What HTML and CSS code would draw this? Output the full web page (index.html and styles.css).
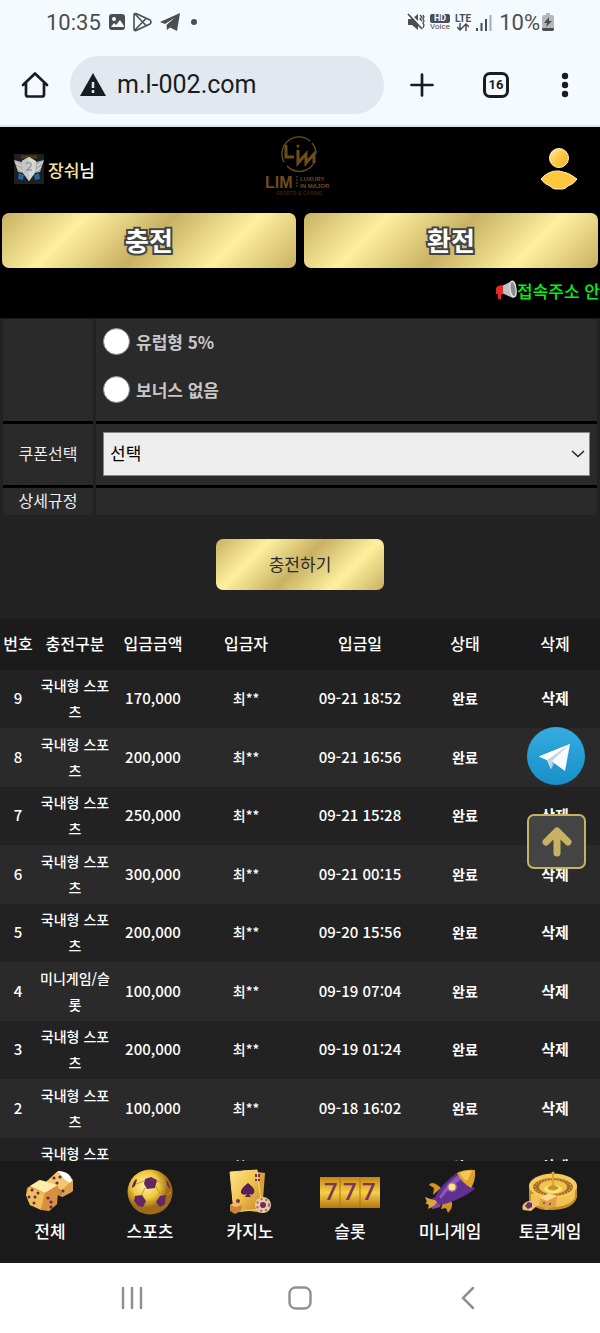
FILE: index.html
```html
<!DOCTYPE html>
<html lang="ko">
<head>
  <meta charset="UTF-8" />
  <meta name="viewport" content="width=device-width, initial-scale=1.0"/>
  <title>충전</title>
  <link rel="stylesheet" href="styles.css">
</head>
<body>
  <!-- phone status bar -->
  <div class="status">
    <div class="status-left">
      <span class="clock">10:35</span>
      <svg width="18" height="18" viewBox="0 0 18 18"><rect x="1" y="1" width="16" height="16" rx="3" fill="#4b4e51"/><circle cx="6" cy="6" r="2" fill="#f5faff"/><path d="M3 14l3-4 2 2 4-5 4 6v1z" fill="#f5faff"/></svg>
      <svg width="20" height="20" viewBox="0 0 20 20" fill="none" stroke="#4b4e51" stroke-width="1.6" stroke-linejoin="round"><path d="M2 1.500Q1 1.500 1 3v14q0 2 2 1.500L17 12q2-2 0-4L3 1.500z"/><path d="M2 2l11 11.500M2 18L13 6.500"/></svg>
      <svg width="20" height="18" viewBox="0 0 20 18"><path d="M0 9L20 0 17 18 10 14.500 7 17 6.500 12 15 4.500 5 11Z" fill="#4b4e51"/></svg>
      <span class="dot"></span>
    </div>
    <div class="status-right">
      <svg width="18" height="18" viewBox="0 0 18 18"><path d="M1 6h4l6-5v16l-6-5H1z" fill="#4b4e51"/><path d="M2 0l14 15" stroke="#f5faff" stroke-width="2"/><path d="M1 1l14 15" stroke="#4b4e51" stroke-width="1.800"/><path d="M13 2l2 2-2 2 2 2M16 2l1 2-1 2 1 2-1 2 1 2-1 3" fill="none" stroke="#4b4e51" stroke-width="1.300"/></svg>
      <span class="hd"><b>HD</b><small>Voice</small></span>
      <span class="lte"><b>LTE</b>
        <svg width="12" height="8" viewBox="0 0 12 8" fill="none" stroke="#4b4e51" stroke-width="1.500"><path d="M3 0v7M0 4l3 3 3-3M9 8V1M6 4l3-3 3 3"/></svg>
      </span>
      <svg class="signal" width="16" height="17" viewBox="0 0 16 17"><path d="M1 17v-3M5.500 17V9M10 17V5" stroke="#4b4e51" stroke-width="2"/><path d="M14.500 17V1" stroke="#a9adb1" stroke-width="2"/></svg>
      <span class="battery"><span class="clock">10%</span>
      <svg width="12" height="18" viewBox="0 0 12 18"><path d="M4 0h4v2h2q2 0 2 2v12q0 2-2 2H2q-2 0-2-2V4q0-2 2-2h2z" fill="#b4b8bb"/><path d="M0 15h12v1q0 2-2 2H2q-2 0-2-2z" fill="#4b4e51"/><path d="M7 4L2 10h3l-1 4 6-6H7z" fill="#4b4e51"/></svg></span>
    </div>
  </div>

  <!-- browser toolbar -->
  <div class="toolbar">
    <button class="tool home" aria-label="홈">
      <svg width="28" height="28" viewBox="0 0 28 28" fill="none" stroke="#191c20" stroke-width="2.700" stroke-linejoin="round" stroke-linecap="round"><path d="M2 14L14 2.500 26 14M5 12v11.500q0 2 2 2h14q2 0 2-2V12"/></svg>
    </button>
    <label class="address">
      <svg width="26" height="24" viewBox="0 0 26 24"><path d="M13 0L26 23H0z" fill="#191c20"/><path d="M13 9v6M13 17v3" stroke="#e2e8f0" stroke-width="2.500"/></svg>
      <input type="text" value="m.l-002.com" aria-label="주소">
    </label>
    <button class="tool" aria-label="새 탭">
      <svg width="24" height="24" viewBox="0 0 24 24" stroke="#191c20" stroke-width="2.700" stroke-linecap="round"><path d="M12 1.500v21M1.500 12h21"/></svg>
    </button>
    <button class="tool tabs" aria-label="탭 목록"><span>16</span></button>
    <button class="tool more" aria-label="메뉴">
      <svg width="8" height="26" viewBox="0 0 8 26" fill="#191c20"><circle cx="4" cy="4" r="3.200"/><circle cx="4" cy="13" r="3.200"/><circle cx="4" cy="22" r="3.200"/></svg>
    </button>
  </div>

  <header class="header">
    <div class="header-top">
      <div class="user">
        <svg width="30" height="30" viewBox="0 0 30 30"><rect width="30" height="30" fill="#1c201e"/><path d="M7 3h16" stroke="#523817" stroke-width="3"/><path d="M5 19l5 2-1 5-5-1zM25 19l-5 2 1 5 5-1z" fill="#2467ae"/><path d="M0 6l8 2 7-5 7 5 8-2-4 12-6 1-5 8-5-8-6-1z" fill="#aeb2b1"/><path d="M8 7l7-4 7 4-1 12-6 8-6-8z" fill="#d6d8d7"/><path d="M8 7l7-4v24l-6-8z" fill="#c4c7c6"/><path d="M1 8l6 4M3 13l5 4M29 8l-6 4M27 13l-5 4" stroke="#e8e9e8" stroke-width="1"/><path d="M12 10q3-3 5 0 1 2-4 6h5" fill="none" stroke="#959b9b" stroke-width="1.500"/></svg>
        <span><span class="gold">장숴</span>님</span>
      </div>
      <a class="logo" href="#" aria-label="LIM">
        <svg width="72" height="62" viewBox="0 0 72 62" fill="none" stroke="#6d4d1b">
          <path d="M20 27A17 17 0 0 1 46 6M48 8A17 17 0 0 1 52 19M50 28A17 17 0 0 1 23 31" stroke-width="1.300"/>
          <path d="M22 10v12h8M34 15v13l8-9v9l8-9v9" stroke-width="3"/><circle cx="34" cy="11" r="1.500" fill="#6d4d1b" stroke="none"/>
          <path d="M33 41v12" stroke-width="1" stroke-dasharray="2 1"/>
          <g fill="#6d4d1b" stroke="none" font-family="Liberation Sans" font-weight="bold"><text x="1" y="53" font-size="16">LIM</text><text x="36" y="46" font-size="6">LUXURY</text><text x="36" y="53" font-size="6">IN MAJOR</text><text x="12" y="60" font-size="5" fill="#33240c">SPORTS &amp; CASINO</text></g>
        </svg>
      </a>
      <a class="profile" href="#" aria-label="내 정보">
        <svg width="38" height="42" viewBox="0 0 38 42"><defs><linearGradient id="person" x2="1" y2="1"><stop stop-color="#fff0b5"/><stop offset=".45" stop-color="#ffc947"/><stop offset="1" stop-color="#eead2c"/></linearGradient></defs><circle cx="19" cy="10" r="9.500" fill="url(#person)" stroke="#fff4cf"/><path d="M1 31Q9 22 19 23t18 8q-3 5-9 7-3 3-5 3h-8q-2 0-5-3-6-2-9-7z" fill="#fdc83e" stroke="#fff0be"/></svg>
      </a>
    </div>
    <div class="money">
      <button class="gold-btn big">충전</button>
      <button class="gold-btn big">환전</button>
    </div>
    <div class="notice">
      <svg width="21" height="20" viewBox="0 0 21 20"><path d="M6 6L16 1q4 0 4 8t-3 9L6 13z" fill="#bfc0c1"/><ellipse cx="17" cy="9" rx="3" ry="8" transform="rotate(-8 17 9)" fill="#8b8d8f" stroke="#e4e4e4" stroke-width="1.200"/><path d="M2 6l5-1v9l-2 1v4H2v-5H0V8z" fill="#df2b2b"/></svg>
      <span>접속주소 안</span>
    </div>
  </header>

  <main class="content">
    <form class="charge">
      <div class="row row-bonus">
        <div class="label"></div>
        <div class="field">
          <label class="bonus"><input type="radio" name="bonus">유럽형 5%</label>
          <label class="bonus"><input type="radio" name="bonus">보너스 없음</label>
        </div>
      </div>
      <div class="row row-coupon">
        <label class="label" for="coupon">쿠폰선택</label>
        <div class="field">
          <div class="select">
            <select id="coupon"><option>선택</option></select>
            <svg width="14" height="8" viewBox="0 0 14 8" fill="none" stroke="#222" stroke-width="1.500"><path d="M1 1l6 5.500L13 1"/></svg>
          </div>
        </div>
      </div>
      <div class="row row-rule">
        <div class="label">상세규정</div>
        <div class="field"></div>
      </div>
      <button type="button" class="gold-btn submit">충전하기</button>
    </form>

    <table class="history">
      <colgroup><col class="c-no"><col class="c-kind"><col class="c-kind"><col class="c-name"><col class="c-date"><col class="c-state"><col class="c-state"></colgroup>
      <thead>
        <tr><th>번호</th><th>충전구분</th><th>입금금액</th><th>입금자</th><th>입금일</th><th>상태</th><th>삭제</th></tr>
      </thead>
      <tbody>
        <tr><td>9</td><td class="kind">국내형 스포츠</td><td>170,000</td><td class="name">최**</td><td>09-21 18:52</td><td class="state">완료</td><td><a href="#">삭제</a></td></tr>
        <tr><td>8</td><td class="kind">국내형 스포츠</td><td>200,000</td><td class="name">최**</td><td>09-21 16:56</td><td class="state">완료</td><td><a href="#">삭제</a></td></tr>
        <tr><td>7</td><td class="kind">국내형 스포츠</td><td>250,000</td><td class="name">최**</td><td>09-21 15:28</td><td class="state">완료</td><td><a href="#">삭제</a></td></tr>
        <tr><td>6</td><td class="kind">국내형 스포츠</td><td>300,000</td><td class="name">최**</td><td>09-21 00:15</td><td class="state">완료</td><td><a href="#">삭제</a></td></tr>
        <tr><td>5</td><td class="kind">국내형 스포츠</td><td>200,000</td><td class="name">최**</td><td>09-20 15:56</td><td class="state">완료</td><td><a href="#">삭제</a></td></tr>
        <tr><td>4</td><td class="kind">미니게임/슬롯</td><td>100,000</td><td class="name">최**</td><td>09-19 07:04</td><td class="state">완료</td><td><a href="#">삭제</a></td></tr>
        <tr><td>3</td><td class="kind">국내형 스포츠</td><td>200,000</td><td class="name">최**</td><td>09-19 01:24</td><td class="state">완료</td><td><a href="#">삭제</a></td></tr>
        <tr><td>2</td><td class="kind">국내형 스포츠</td><td>100,000</td><td class="name">최**</td><td>09-18 16:02</td><td class="state">완료</td><td><a href="#">삭제</a></td></tr>
        <tr><td>1</td><td class="kind">국내형 스포츠</td><td>100,000</td><td class="name">최**</td><td>09-18 00:00</td><td class="state">완료</td><td><a href="#">삭제</a></td></tr>
      </tbody>
    </table>
  </main>

  <div class="floating">
    <a href="#" aria-label="텔레그램">
      <svg width="58" height="58" viewBox="0 0 58 58"><defs><linearGradient id="tg" x2="0" y2="1"><stop stop-color="#34ace0"/><stop offset="1" stop-color="#188fc8"/></linearGradient></defs><circle cx="29" cy="29" r="29" fill="url(#tg)"/><path d="M12 29.500L43 17 38 44 27 36 24 42 20 33z" fill="#f7fafe"/><path d="M12 29.500l8 3.500L43 17z" fill="#fff"/><path d="M20 33l4 9 1-8L43 17z" fill="#c5d5e8"/><path d="M24 42l3-6-2-2z" fill="#9fb5d1"/></svg>
    </a>
    <button class="top-btn" aria-label="맨 위로">
      <svg width="32" height="32" viewBox="0 0 32 32" fill="none" stroke="#c8b163" stroke-width="7" stroke-linecap="round" stroke-linejoin="round"><path d="M16 27V7M5 16L16 5l11 11"/></svg>
    </button>
  </div>

  <nav class="menu">
    <a href="#">
      <svg width="50" height="46" viewBox="0 0 50 46"><g stroke-linejoin="round"><path d="M21 13L33 2l15 9-1 12-10 5-16-7z" fill="#c98b3b"/><path d="M21 13L33 2l15 9-11 10z" fill="#f4c76a"/><path d="M33 2q14 0 15 14l-9-6z" fill="#fff"/><path d="M37 21l11-10v11l-11 6z" fill="#dba24b"/><path d="M2 19l12-8 19 5-1 19-8 7-19-6-4-10z" fill="#d98f37"/><path d="M5 17l10-6 18 5-13 8z" fill="#ffebaa"/><path d="M4 18l16 6-4 17-11-5-4-10z" fill="#efbf55"/><path d="M20 24l13-8-1 19-8 7-8-1z" fill="#d98f3e"/></g><g fill="#64266e"><circle cx="29" cy="9" r="1.600"/><circle cx="35" cy="8" r="1.600"/><circle cx="32" cy="14" r="1.600"/><circle cx="7" cy="21" r="1.500"/><circle cx="13" cy="24" r="1.500"/><circle cx="4" cy="28" r="1.500"/><circle cx="10" cy="28" r="1.500"/><circle cx="9" cy="34" r="1.500"/><circle cx="23" cy="29" r="1.600"/><circle cx="26" cy="33" r="1.600"/><circle cx="26" cy="38" r="1.600"/><circle cx="38" cy="22" r="1.500"/></g></svg>
      <span>전체</span>
    </a>
    <a href="#">
      <svg width="46" height="46" viewBox="0 0 46 46"><defs><radialGradient id="ball" cx=".4" cy=".35"><stop stop-color="#fff3a3"/><stop offset=".6" stop-color="#efc840"/><stop offset="1" stop-color="#a06b16"/></radialGradient></defs><circle cx="23" cy="23" r="22.500" fill="url(#ball)"/><path d="M18 19l-4 8M29 18l5 8M18 33h10M17 12l-8 3M30 12l8 3M7 26l-5-3M40 26l4-3" fill="none" stroke="#c99630"/><path d="M18 10l6-2 6 3-2 8-8 1-3-5z" fill="#652764"/><path d="M8 27l7-1 4 6-3 6-5-1-4-5zM39 26l-6 1-4 6 4 5 5-3zM9 10q-4 4-4 9l3-2 2-6zM39 11q4 4 4 9l-3-4z" fill="#652764"/></svg>
      <span>스포츠</span>
    </a>
    <a href="#">
      <svg width="44" height="46" viewBox="0 0 44 46"><defs><linearGradient id="card" x2="1" y2="1"><stop stop-color="#ffe58c"/><stop offset=".5" stop-color="#f0c24b"/><stop offset="1" stop-color="#c1801f"/></linearGradient></defs><path d="M15 1l22 3-3 40-22-4z" fill="#d9a137"/><path d="M2 3l27-2 5 39-28 3z" fill="url(#card)" stroke="#f8d878"/><path d="M20 14q8 6 6 10-2 3-5 1l2 3h-6l2-3q-4 2-6-1-1-4 7-10z" fill="#552055"/><path d="M28 5v3M31 5v3M28 10v2M31 10v2" stroke="#6c315d" stroke-width="2"/><path d="M2 36l6-3 6 3-1 6-6 3-5-3z" fill="#cf823b"/><path d="M2 36l6-3 6 3-6 2z" fill="#efbd68"/><circle cx="10" cy="32" r="2" fill="#793453"/><circle cx="35" cy="36" r="8" fill="#efc99a"/><circle cx="35" cy="36" r="6" fill="none" stroke="#9a6690" stroke-width="2" stroke-dasharray="2 3"/><circle cx="35" cy="36" r="3" fill="#653065"/></svg>
      <span>카지노</span>
    </a>
    <a href="#">
      <svg width="60" height="46" viewBox="0 0 60 46"><defs><linearGradient id="slot" x2="0" y2="1"><stop stop-color="#c58415"/><stop offset=".5" stop-color="#f5d044"/><stop offset="1" stop-color="#b77412"/></linearGradient></defs><rect y="8" width="60" height="31" fill="url(#slot)"/><path d="M20 8v31M40 8v31" stroke="#ad7516"/><g font-family="Roboto" font-weight="500" font-size="24" fill="#79355a"><text x="4" y="31">7</text><text x="23" y="31">7</text><text x="42" y="31">7</text></g></svg>
      <span>슬롯</span>
    </a>
    <a href="#">
      <svg width="54" height="46" viewBox="0 0 54 46"><path d="M18 19q-9-8-12-3l5 3-1 7zM26 29q7 7-1 15l-2-5-5 1 3-10z" fill="#d39324"/><path d="M8 30l7-2 4 5-2 5-7 2-5-3 3-2-2-3z" fill="#8b479c"/><path d="M10 31l-8-3 2 5-2 1 4 2-1 4 7-4 3-5z" fill="#e0a53a"/><path d="M11 30q7-15 24-27l17 17Q36 32 17 36z" fill="#61308f"/><path d="M16 28Q25 13 38 4l4 4Q27 17 18 30z" fill="#8b55b5"/><path d="M34 4q8-4 18-3 1 10-4 18-9-5-14-15z" fill="#dca42e"/><path d="M37 4q6-3 12-2l-5 10q-5-3-7-8z" fill="#f3ca58"/><circle cx="29" cy="18" r="5" fill="#9e6ba9"/><circle cx="29" cy="18" r="3.500" fill="#ffe57b"/></svg>
      <span>미니게임</span>
    </a>
    <a href="#">
      <svg width="56" height="46" viewBox="0 0 56 46"><path d="M7 18v13q5 11 24 10 21-1 24-13V17z" fill="#c88c21"/><path d="M9 25v8q8 7 24 5 17-2 20-10v-8z" fill="#efc357"/><ellipse cx="31" cy="17" rx="24" ry="12.500" fill="#f5cc57"/><ellipse cx="31" cy="18" rx="20" ry="9" fill="#a96b2a"/><ellipse cx="31" cy="18" rx="18" ry="8" fill="none" stroke="#d9a156" stroke-width="2" stroke-dasharray="1 2"/><ellipse cx="31" cy="18" rx="14" ry="7" fill="#edc549"/><ellipse cx="31" cy="20" rx="9" ry="4" fill="#ffe47c"/><path d="M31 3v15" stroke="#d8a637" stroke-width="2"/><path d="M25 19q6-6 12 0-6 5-12 0z" fill="#c7932b"/><circle cx="31" cy="4" r="1.500" fill="#d8a637"/><path d="M18 29l9-5 8 3-1 10-10 4-7-5z" fill="#e3a145"/><path d="M18 29l9-5 8 3-10 5z" fill="#ffd98a"/><circle cx="22" cy="34" r="1" fill="#753b69"/><circle cx="28" cy="35" r="1" fill="#753b69"/><path d="M15 29L4 33q-5 3-3 8l8 1 7-6z" fill="#efc069"/><path d="M6 33l4 1v4l-4 2-3-3z" fill="#653072"/></svg>
      <span>토큰게임</span>
    </a>
  </nav>

  <!-- android navigation keys -->
  <div class="keys">
    <button aria-label="최근 앱"><svg width="24" height="24" viewBox="0 0 24 24" stroke="#909090" stroke-width="2.500" stroke-linecap="round"><path d="M3 2v20M12 2v20M21 2v20"/></svg></button>
    <button aria-label="홈"><svg width="24" height="24" viewBox="0 0 24 24" fill="none" stroke="#909090" stroke-width="2.400"><rect x="1.500" y="1.500" width="21" height="21" rx="6"/></svg></button>
    <button aria-label="뒤로"><svg width="24" height="24" viewBox="0 0 24 24" fill="none" stroke="#909090" stroke-width="2.500" stroke-linecap="round"><path d="M17 2L7 12l10 10"/></svg></button>
  </div>
</body>
</html>
```

FILE: styles.css
```css
* { box-sizing: border-box; }
body { margin: 0; height: 100vh; display: flex; flex-direction: column; overflow: hidden; position: relative; background: #222; color: #fff; font-family: "Noto Sans CJK KR", sans-serif; font-size: 17px; }
button, input, select { font: inherit; color: inherit; margin: 0; }
button { border: 0; padding: 0; background: none; cursor: pointer; }
a { color: inherit; text-decoration: none; }
svg { display: block; flex: none; }

.status { height: 44px; padding: 0 46px; display: flex; justify-content: space-between; align-items: center; background: #f5faff; color: #4b4e51; font-family: Roboto, sans-serif; }
.status-left { display: flex; align-items: center; gap: 7px; }
.status-right { display: flex; align-items: center; gap: 5px; }
.battery { display: flex; align-items: center; gap: 2px; margin-left: 2px; }
.clock { font-size: 22px; }
.dot { width: 6px; height: 6px; margin-left: 4px; border-radius: 50%; background: #4b4e51; }
.hd, .lte { display: flex; flex-direction: column; align-items: center; font-size: 9px; line-height: 9px; }
.hd b { width: 20px; border-radius: 2px; background: #4b4e51; color: #f5faff; text-align: center; }
.hd small { font-size: 8px; line-height: 8px; }
.lte b { font-size: 10px; font-weight: 700; }

.toolbar { height: 83px; padding: 0 16px 0 21px; display: flex; align-items: center; background: #f5faff; border-bottom: 2px solid #dfe4ec; color: #191c20; font-family: Roboto, sans-serif; }
.tool { flex: none; display: flex; justify-content: center; align-items: center; width: 76px; height: 48px; }
.tool.home { width: 28px; margin-right: 21px; }
.tool.more { width: 38px; margin-left: 14px; }
.tool.tabs { width: 72px; }
.tabs span { width: 26px; height: 26px; border: 3px solid #191c20; border-radius: 7px; font-size: 13px; line-height: 20px; font-weight: 700; text-align: center; }
.address { flex: 1; min-width: 0; height: 58px; padding: 0 10px; display: flex; align-items: center; gap: 11px; border-radius: 29px; background: #e2e8f0; }
.address input { flex: 1; min-width: 0; padding: 0; border: 0; outline: 0; background: none; font-size: 25px; }

.header { background: #000; border-bottom: 1px solid #1a1a1a; }
.header-top { height: 86px; padding: 0 14px; display: grid; grid-template-columns: 1fr auto 1fr; align-items: center; }
.user { display: flex; align-items: center; gap: 4px; padding-bottom: 2px; }
.user span { font-weight: 500; }
.gold { color: #f6e29a; }
.logo { align-self: start; padding-top: 8px; }
.profile { justify-self: end; margin-right: 8px; padding-bottom: 2px; }
.money { display: grid; grid-template-columns: 1fr 1fr; gap: 8px; padding: 0 2px; }
.gold-btn { padding-bottom: 2px; border-radius: 7px; background: linear-gradient(135deg, #c8b163 0%, #ffef9f 25%, #c8b163 50%, #ffef9f 75%, #c8b163 100%); color: #2b2b2b; }
.gold-btn.big { height: 55px; color: #fff; font-size: 26px; font-weight: 700; -webkit-text-stroke: 4px #444; paint-order: stroke fill; }
.notice { height: 50px; padding-bottom: 6px; display: flex; justify-content: flex-end; align-items: center; overflow: hidden; white-space: nowrap; color: #00f01c; font-weight: 500; }

.content { flex: 1; min-height: 0; overflow: hidden; }
.charge { display: flex; flex-direction: column; }
.row { display: grid; grid-template-columns: 90px 1fr; gap: 3px; padding: 0 3px; }
.label, .field { background: #2a2a2a; border-bottom: 3px solid #000; }
.label { display: flex; align-items: center; justify-content: center; padding-bottom: 3px; color: #eee; font-size: 16px; }
.field { padding: 8px 7px; }
.row-bonus { height: 105px; }
.row-coupon { height: 64px; }
.row-rule { height: 27px; }
.row-rule .label, .row-rule .field { border: 0; }
.row-bonus .field { display: flex; flex-direction: column; gap: 22px; padding-top: 9px; }
.bonus { display: flex; align-items: center; gap: 6px; height: 26px; color: #c8c8c8; font-weight: 700; }
.bonus input { appearance: none; width: 27px; height: 27px; border: 1px solid #888; border-radius: 50%; background: #fff; }
.select { display: grid; align-items: center; }
.select select, .select svg { grid-area: 1 / 1; }
.select select { appearance: none; width: 100%; height: 44px; padding: 0 6px 3px; border: 1px solid #858585; border-radius: 0; background: #eee; color: #000; }
.select svg { justify-self: end; margin-right: 5px; pointer-events: none; }
.submit { width: 168px; height: 51px; margin: 24px auto 29px; }

.history { width: 100%; table-layout: fixed; border-collapse: collapse; text-align: center; font-size: 15px; font-weight: 500; line-height: 26px; }
.c-no { width: 6%; }
.c-kind { width: 13%; }
.c-name { width: 18%; }
.c-date { width: 20%; }
.c-state { width: 15%; }
.history th { height: 51px; padding: 0 0 3px; background: #1b1b1b; font-size: 16px; font-weight: 500; white-space: nowrap; }
.history td { height: 58px; padding: 2px 0 4px; }
.history tr:nth-child(even) td { height: 59px; background: #2a2a2a; }
.history .kind { padding: 2px 3px 4px; font-size: 14px; word-break: break-all; }
.history .name { font-size: 14px; }
.history .state { font-size: 14px; font-weight: 700; }
.history td a { font-weight: 700; }

.floating { position: absolute; right: 14px; top: 727px; display: flex; flex-direction: column; gap: 29px; }
.top-btn { width: 59px; height: 55px; display: flex; justify-content: center; align-items: center; border: 2px solid #c8b163; border-radius: 7px; background: #444; }

.menu { height: 102px; padding-top: 8px; display: grid; grid-template-columns: repeat(6, 1fr); background: #1a1a1a; font-weight: 500; }
.menu a { display: flex; flex-direction: column; align-items: center; gap: 3px; line-height: 25px; }
.keys { height: 70px; padding: 0 48px; display: grid; grid-template-columns: repeat(3, 1fr); align-items: center; background: #fff; }
.keys button { display: flex; justify-content: center; }
```
